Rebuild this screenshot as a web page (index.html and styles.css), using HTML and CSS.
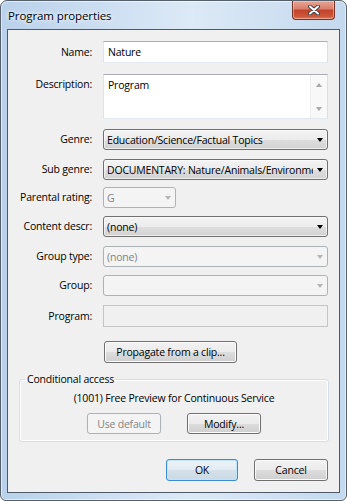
FILE: index.html
```html
<!DOCTYPE html>
<html lang="en">
<head>
    <meta charset="UTF-8">
    <title>Program properties</title>
    <link rel="stylesheet" href="styles.css">
</head>
<body>
    <div class="window">
        <div class="titlebar">
            <span class="title">Program properties</span>
            <div class="close-btn">
                <svg width="12" height="10" viewBox="0 0 12 10">
                    <path d="M2 1.5L10 8.5M10 1.5L2 8.5" stroke="#3e4147" stroke-width="4" stroke-linecap="round"/>
                    <path d="M2 1.5L10 8.5M10 1.5L2 8.5" stroke="#fff" stroke-width="2" stroke-linecap="round"/>
                </svg>
            </div>
        </div>
        <div class="client">
            <div class="form">
                <div class="label tb">Name:</div>
                <div class="textbox">Nature</div>

                <div class="label multi">Description:</div>
                <div class="textarea">
                    <div class="textarea-text">Program</div>
                    <div class="scrollbar">
                        <span class="sb-arrow up"></span>
                        <span class="sb-arrow down"></span>
                    </div>
                </div>

                <div class="label">Genre:</div>
                <div class="combo"><span class="combo-text">Education/Science/Factual Topics</span><span class="arrow"></span></div>

                <div class="label">Sub genre:</div>
                <div class="combo"><span class="combo-text">DOCUMENTARY: Nature/Animals/Environment</span><span class="arrow"></span></div>

                <div class="label">Parental rating:</div>
                <div class="combo disabled short"><span class="combo-text">G</span><span class="arrow"></span></div>

                <div class="label">Content descr:</div>
                <div class="combo"><span class="combo-text">(none)</span><span class="arrow"></span></div>

                <div class="label">Group type:</div>
                <div class="combo disabled"><span class="combo-text">(none)</span><span class="arrow"></span></div>

                <div class="label">Group:</div>
                <div class="combo disabled"><span class="combo-text"></span><span class="arrow"></span></div>

                <div class="label tb">Program:</div>
                <div class="textbox disabled"></div>
            </div>

            <div class="propagate-row">
                <button class="btn propagate">Propagate from a clip...</button>
            </div>

            <fieldset class="groupbox">
                <legend>Conditional access</legend>
                <div class="access-text">(1001) Free Preview for Continuous Service</div>
                <div class="access-buttons">
                    <button class="btn disabled" disabled>Use default</button>
                    <button class="btn">Modify...</button>
                </div>
            </fieldset>

            <div class="dialog-buttons">
                <button class="btn default ok">OK</button>
                <button class="btn cancel">Cancel</button>
            </div>
        </div>
    </div>
</body>
</html>
```

FILE: styles.css
```css
* {
    box-sizing: border-box;
}

body {
    margin: 0;
    font-family: "Open Sans", sans-serif;
    font-size: 10.5px;
    letter-spacing: -0.2px;
    color: #000;
    background: #fff;
}

.window {
    width: 347px;
    height: 501px;
    border: 1px solid #56606b;
    border-radius: 7px 7px 6px 6px;
    background: linear-gradient(to right, #b9d1ea, #d3e3f4 40%, #dce9f6 55%, #c4d9ee);
    box-shadow: inset 0 0 0 1px rgba(255, 255, 255, 0.55);
    padding: 0 6px 7px 6px;
    display: flex;
    flex-direction: column;
}

.titlebar {
    height: 28px;
    display: flex;
    justify-content: space-between;
    align-items: flex-start;
}

.title {
    padding: 7px 0 0 1px;
    font-size: 11.5px;
    letter-spacing: -0.1px;
    color: #000;
    text-shadow: 0 0 6px #fff, 0 0 3px #fff;
}

.close-btn {
    width: 43px;
    height: 19px;
    margin-right: 5px;
    border: 1px solid #7a3226;
    border-top: none;
    border-radius: 0 0 4px 4px;
    background: linear-gradient(#e8a594, #d77e69 45%, #c24229 50%, #cc5638 85%, #de7d5c);
    box-shadow: inset 0 0 0 1px rgba(255, 220, 210, 0.45);
    display: flex;
    justify-content: center;
    align-items: center;
}

.client {
    flex: 1;
    background: #f0f0f0;
    border: 1px solid #4e5a68;
    padding-top: 11px;
    display: flex;
    flex-direction: column;
}

.form {
    display: grid;
    grid-template-columns: 84px 225px;
    grid-template-rows: 33px 55px 30px 28px 29px 30px 29px 30px 22px;
    column-gap: 11px;
}

.label {
    text-align: right;
    line-height: 21px;
    white-space: nowrap;
}

.label.tb {
    line-height: 22px;
}

.label.multi {
    line-height: 20px;
}

.textbox {
    height: 22px;
    border: 1px solid;
    border-color: #abadb3 #dbdfe6 #e3e9ef #e2e3ea;
    background: #fff;
    padding: 0 4px;
    line-height: 20px;
}

.textbox.disabled {
    background: #f0f0f0;
    border-color: #c4c4c4;
}

.textarea {
    height: 45px;
    border: 1px solid;
    border-color: #abadb3 #dbdfe6 #e3e9ef #e2e3ea;
    background: #fff;
    display: flex;
}

.textarea-text {
    flex: 1;
    padding: 0 4px;
    line-height: 20px;
}

.scrollbar {
    width: 17px;
    background: #f8f8f8;
    border-left: 1px solid #ededed;
    display: flex;
    flex-direction: column;
    justify-content: space-between;
    align-items: center;
    padding: 8px 0 7px;
}

.sb-arrow {
    width: 1px;
    height: 0;
    border: solid transparent;
}

.sb-arrow.up {
    border-width: 0 3px 4px;
    border-bottom-color: #a7a7a7;
}

.sb-arrow.down {
    border-width: 4px 3px 0;
    border-top-color: #a7a7a7;
}

.combo {
    height: 21px;
    border: 1px solid #707070;
    border-radius: 3px;
    background: linear-gradient(#f3f3f3, #ececec 50%, #dedede 50%, #d2d2d2);
    box-shadow: inset 0 0 0 1px rgba(255, 255, 255, 0.6);
    display: flex;
    align-items: center;
    padding: 0 4px 0 3px;
    overflow: hidden;
}

.combo-text {
    flex: 1;
    white-space: nowrap;
    overflow: hidden;
}

.arrow {
    width: 1px;
    height: 0;
    flex: none;
    margin-left: 4px;
    border: solid transparent;
    border-width: 4px 3px 0;
    border-top-color: #000;
}

.combo.disabled {
    border-color: #adb2b5;
    background: #f4f4f4;
    box-shadow: none;
    color: #838383;
}

.combo.disabled .arrow {
    border-top-color: #b4b4b4;
}

.combo.short {
    width: 73px;
}

.btn {
    height: 22px;
    border: 1px solid #707070;
    border-radius: 3px;
    background: linear-gradient(#f2f2f2, #ebebeb 50%, #dddddd 50%, #cfcfcf);
    box-shadow: inset 0 0 0 1px #fbfbfb;
    font: inherit;
    letter-spacing: inherit;
    color: #000;
    padding: 0;
}

.btn.disabled {
    border-color: #adb2b5;
    background: #f4f4f4;
    box-shadow: none;
    color: #838383;
}

.btn.default {
    border-color: #3c8ccf;
    background: linear-gradient(#edf3f8, #e3ebf2 50%, #d5e1ea 50%, #cbd9e4);
    box-shadow: inset 0 0 0 1px #bfe3f8;
}

.propagate-row {
    margin: 14px 0 0 96px;
}

.propagate {
    width: 133px;
}

.groupbox {
    margin: 9px 10px 0 11px;
    padding: 0 0 7px;
    border: 1px solid #d5dfe5;
    border-radius: 3px;
    box-shadow: inset 0 0 0 1px #fff;
}

.groupbox legend {
    margin-left: 5px;
    padding: 0 2px;
    line-height: 14px;
}

.access-text {
    text-align: center;
    margin-top: 4px;
    line-height: 16px;
}

.access-buttons {
    display: flex;
    justify-content: center;
    gap: 26px;
    margin-top: 7px;
}

.access-buttons .btn {
    width: 74px;
    height: 21px;
}

.dialog-buttons {
    display: flex;
    justify-content: flex-end;
    gap: 16px;
    margin: 17px 11px 0 0;
}

.ok {
    width: 72px;
}

.cancel {
    width: 74px;
}
```
